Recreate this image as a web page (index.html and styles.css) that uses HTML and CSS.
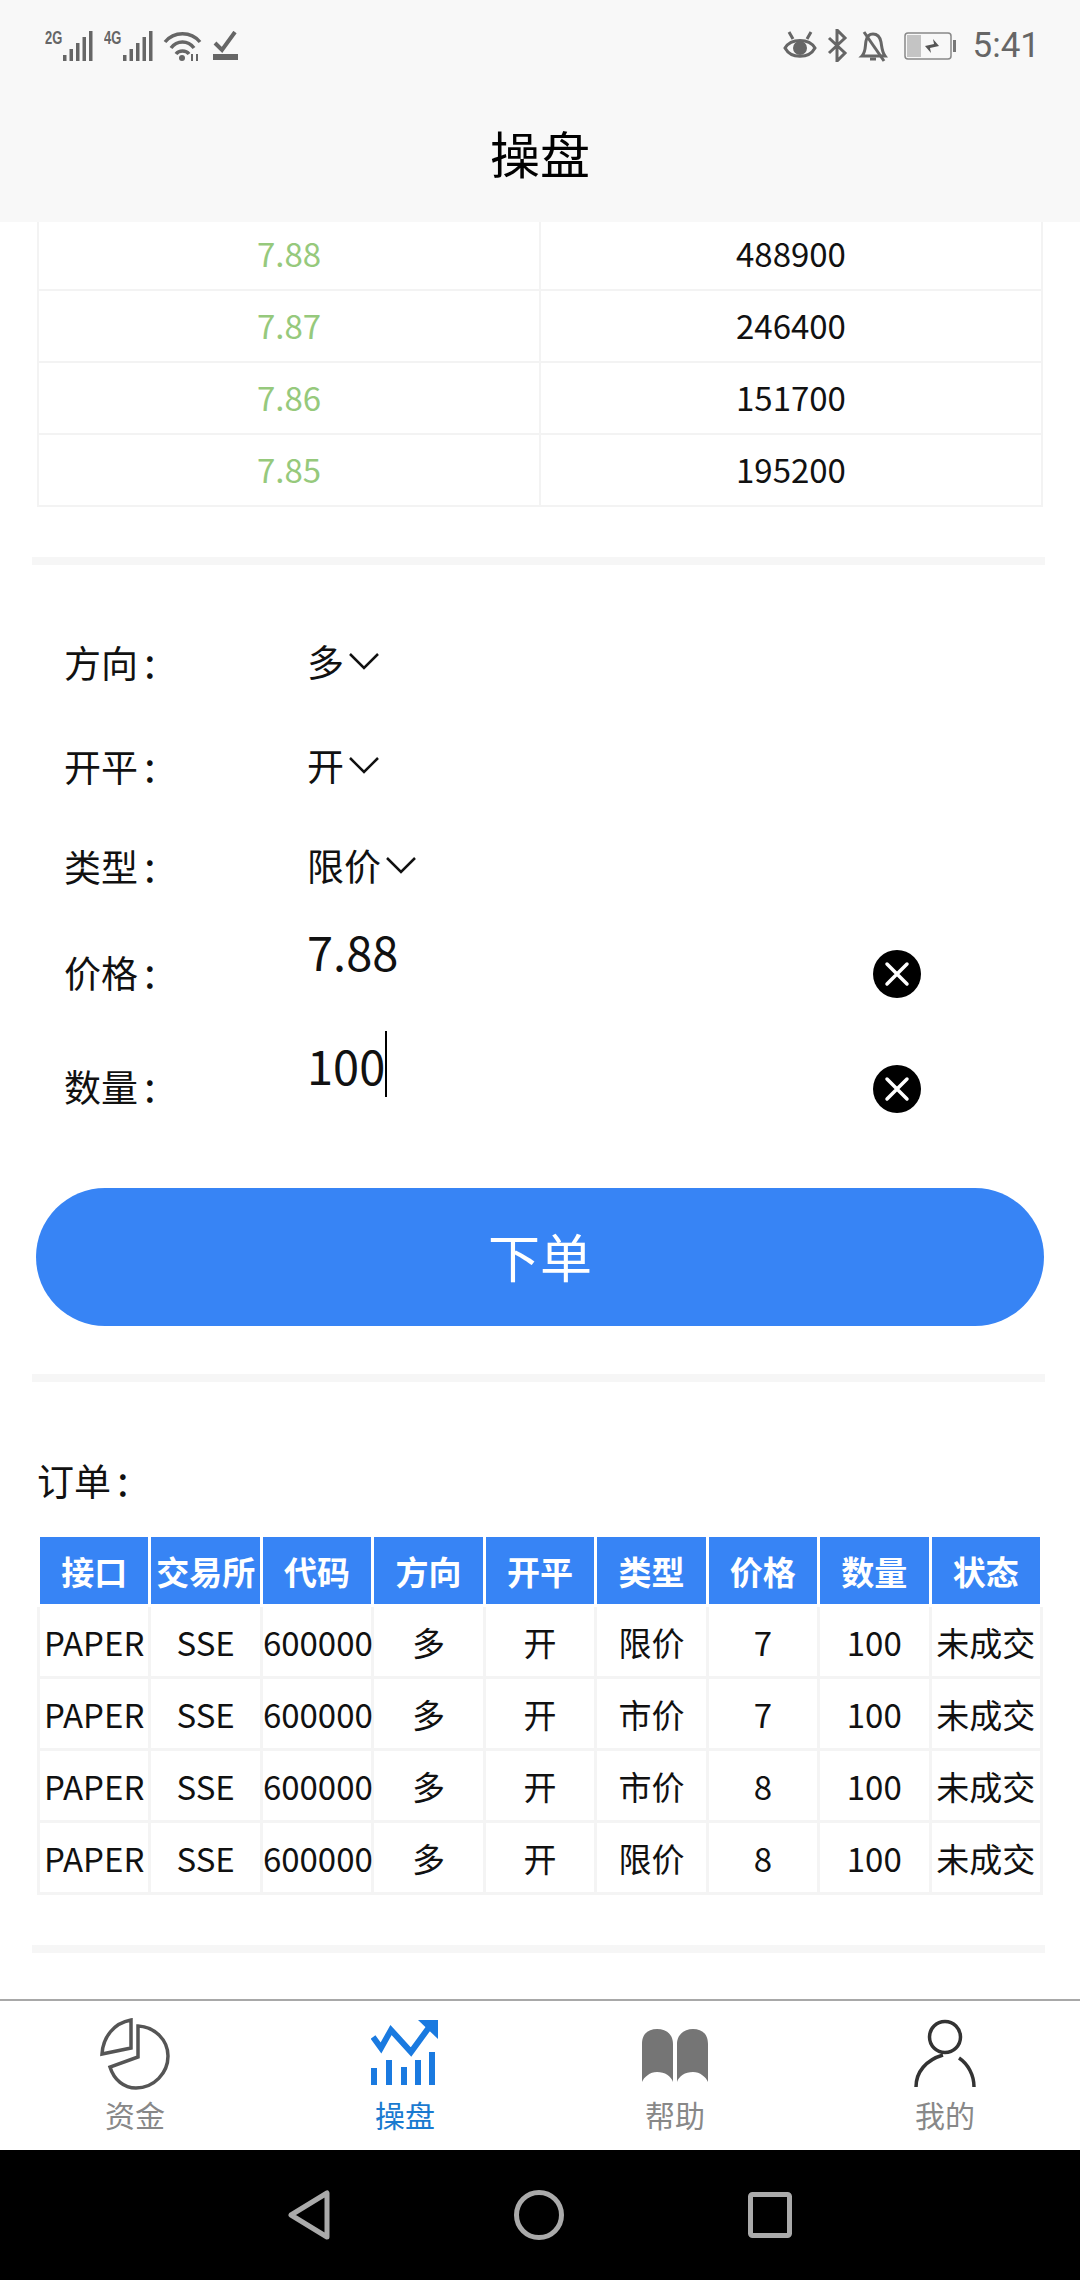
FILE: index.html
```html
<!DOCTYPE html>
<html lang="zh-CN">
<head>
<meta charset="UTF-8">
<meta name="viewport" content="width=device-width, initial-scale=1.0">
<title>操盘</title>
<link rel="stylesheet" href="styles.css">
</head>
<body>
<div class="app">
  <header class="header">
    <div class="status">
      <div class="status-left">
        <span class="net">2G</span>
        <svg class="ic-signal" width="31" height="32" viewBox="0 0 31 32">
          <g fill="#666"><rect x="1" y="25" width="3.5" height="6"/><rect x="7.5" y="19" width="3.5" height="12"/><rect x="14" y="13" width="3.5" height="18"/><rect x="20.5" y="7" width="3.5" height="24"/><rect x="27" y="1" width="3.5" height="30"/></g>
        </svg>
        <span class="net">4G</span>
        <svg class="ic-signal2" width="33" height="32" viewBox="0 0 33 32">
          <g fill="#666"><rect x="2" y="25" width="3.5" height="6"/><rect x="8.5" y="19" width="3.5" height="12"/><rect x="15" y="13" width="3.5" height="18"/><rect x="21.5" y="7" width="3.5" height="24"/><rect x="28" y="1" width="3.5" height="30"/></g>
        </svg>
        <svg class="ic-wifi" width="39" height="32" viewBox="0 0 39 32" fill="none" stroke="#666" stroke-width="3.5">
          <path d="M2 12C11 1 28 1 37 12"/><path d="M8 18C14 10 25 10 31 18"/><path d="M13 24C16 20 23 20 26 24"/>
          <circle cx="19" cy="28" r="3" fill="#666" stroke="none"/>
          <path d="M29 24v7M34 24v7" stroke-width="2"/>
        </svg>
        <svg class="ic-check" width="25" height="30" viewBox="0 0 25 30">
          <path d="M2 12l7 7L22 1" fill="none" stroke="#666" stroke-width="4"/>
          <rect x="0" y="23" width="25" height="6" fill="#666"/>
        </svg>
      </div>
      <div class="status-right">
        <svg class="ic-eye" width="34" height="30" viewBox="0 0 34 30" fill="none" stroke="#666" stroke-width="3">
          <path d="M2 17C8 7 26 7 32 17C26 28 8 28 2 17Z"/><circle cx="17" cy="17" r="7" fill="#666" stroke="none"/>
          <path d="M6 1l4 7M28 1l-4 7" stroke-width="3"/>
        </svg>
        <svg class="ic-bt" width="21" height="33" viewBox="0 0 21 33" fill="none" stroke="#666" stroke-width="3">
          <path d="M2 9l16 15-8 8V1l8 8L2 24"/>
        </svg>
        <svg class="ic-bell" width="30" height="32" viewBox="0 0 30 32" fill="none" stroke="#666" stroke-width="3">
          <path d="M4 26C8 22 7 16 8 11C9 6 12 4 15 4C19 4 22 7 23 12C24 18 24 22 27 26Z"/>
          <path d="M6 2L26 31" /><path d="M12 29h6" stroke-width="3"/>
        </svg>
        <svg class="ic-batt" width="52" height="28" viewBox="0 0 52 28">
          <rect x="1" y="1" width="46" height="26" rx="3" fill="none" stroke="#888" stroke-width="1.5"/>
          <rect x="3" y="3" width="14" height="22" fill="#c4c4c4"/>
          <rect x="49" y="8" width="3" height="12" fill="#777"/>
          <path d="M21 14l9-2-1-5 6 7-9 2 1 5z" fill="#555"/>
        </svg>
        <span class="time">5:41</span>
      </div>
    </div>
    <div class="title">操盘</div>
  </header>

  <main class="main">
    <div class="scroll">
      <table class="depth">
        <tr><td class="buy">7.88</td><td>488900</td></tr>
        <tr><td class="buy">7.87</td><td>246400</td></tr>
        <tr><td class="buy">7.86</td><td>151700</td></tr>
        <tr><td class="buy">7.85</td><td>195200</td></tr>
      </table>
      <div class="divider divider-first"></div>

      <div class="form">
        <div class="label">方向<span class="colon">:</span></div>
        <div class="select"><span>多</span><svg width="30" height="18" viewBox="0 0 30 18" fill="none" stroke="#111" stroke-width="2.5"><path d="M1 2l14 14L29 2"/></svg></div>
        <div></div>

        <div class="label">开平<span class="colon">:</span></div>
        <div class="select"><span>开</span><svg width="30" height="18" viewBox="0 0 30 18" fill="none" stroke="#111" stroke-width="2.5"><path d="M1 2l14 14L29 2"/></svg></div>
        <div></div>

        <div class="label">类型<span class="colon">:</span></div>
        <div class="select"><span>限价</span><svg width="30" height="18" viewBox="0 0 30 18" fill="none" stroke="#111" stroke-width="2.5"><path d="M1 2l14 14L29 2"/></svg></div>
        <div></div>

        <div class="label">价格<span class="colon">:</span></div>
        <div class="value">7.88</div>
        <svg class="clear" width="48" height="48" viewBox="0 0 48 48"><circle cx="24" cy="24" r="24" fill="#000"/><path d="M14 14l20 20M34 14L14 34" stroke="#fff" stroke-width="3.5" stroke-linecap="round"/></svg>

        <div class="label">数量<span class="colon">:</span></div>
        <div class="value value-qty">100<i class="caret"></i></div>
        <svg class="clear" width="48" height="48" viewBox="0 0 48 48"><circle cx="24" cy="24" r="24" fill="#000"/><path d="M14 14l20 20M34 14L14 34" stroke="#fff" stroke-width="3.5" stroke-linecap="round"/></svg>
      </div>

      <button class="submit" type="button">下单</button>
      <div class="divider divider-second"></div>

      <div class="orders-title">订单<span class="colon">:</span></div>
      <table class="orders">
        <tr><th>接口</th><th>交易所</th><th>代码</th><th>方向</th><th>开平</th><th>类型</th><th>价格</th><th>数量</th><th>状态</th></tr>
        <tr><td>PAPER</td><td>SSE</td><td>600000</td><td>多</td><td>开</td><td>限价</td><td>7</td><td>100</td><td>未成交</td></tr>
        <tr><td>PAPER</td><td>SSE</td><td>600000</td><td>多</td><td>开</td><td>市价</td><td>7</td><td>100</td><td>未成交</td></tr>
        <tr><td>PAPER</td><td>SSE</td><td>600000</td><td>多</td><td>开</td><td>市价</td><td>8</td><td>100</td><td>未成交</td></tr>
        <tr><td>PAPER</td><td>SSE</td><td>600000</td><td>多</td><td>开</td><td>限价</td><td>8</td><td>100</td><td>未成交</td></tr>
      </table>
      <div class="divider divider-third"></div>
    </div>
  </main>

  <nav class="tabbar">
    <div class="tab">
      <svg width="70" height="72" viewBox="0 0 70 72" fill="none" stroke="#555" stroke-width="3.5">
        <path d="M31 2C14 5 3 19 2 36L31 30Z"/>
        <path d="M38 8V39L10 49C14 62 24 70 36 70C54 70 68 55 68 38C68 22 55 9 38 8Z"/>
      </svg>
      <span>资金</span>
    </div>
    <div class="tab active">
      <svg width="68" height="72" viewBox="0 0 68 72">
        <path d="M2 19l8 11 10-18 20 22 19-26" fill="none" stroke="#1a7ae0" stroke-width="6"/>
        <path d="M47 2h20v19z" fill="#1a7ae0"/>
        <g fill="#1a7ae0"><rect x="0" y="50" width="6" height="17"/><rect x="15" y="42" width="6" height="25"/><rect x="30" y="49" width="6" height="18"/><rect x="44" y="42" width="6" height="25"/><rect x="58" y="34" width="6" height="33"/></g>
      </svg>
      <span>操盘</span>
    </div>
    <div class="tab">
      <svg width="68" height="72" viewBox="0 0 68 72" fill="#757575">
        <path d="M1 26C1 15 8 11 16 11C25 11 32 16 32 26V64C30 58 24 54 16 54C9 54 3 59 1 64Z"/>
        <path d="M36 26C36 16 44 11 52 11C60 11 67 15 67 26V64C65 59 59 54 52 54C44 54 38 58 36 64Z"/>
      </svg>
      <span>帮助</span>
    </div>
    <div class="tab">
      <svg width="62" height="72" viewBox="0 0 62 72" fill="none" stroke="#333" stroke-width="3.5">
        <circle cx="31" cy="19" r="15.5"/>
        <path d="M2 69C2 54 12 42 29 37"/><path d="M45 40C54 46 60 57 60 69"/>
      </svg>
      <span>我的</span>
    </div>
  </nav>

  <div class="navbar">
    <svg width="42" height="50" viewBox="0 0 42 50" fill="none" stroke="#aaa" stroke-width="5" stroke-linejoin="round"><path d="M39 3V47L3 25Z"/></svg>
    <svg width="50" height="50" viewBox="0 0 50 50" fill="none" stroke="#aaa" stroke-width="5"><circle cx="25" cy="25" r="22.5"/></svg>
    <svg width="44" height="46" viewBox="0 0 44 46" fill="none" stroke="#aaa" stroke-width="5" stroke-linejoin="round"><rect x="2.5" y="2.5" width="39" height="41" rx="2"/></svg>
  </div>
</div>
</body>
</html>
```

FILE: styles.css
```css
* {
  box-sizing: border-box;
}
body {
  margin: 0;
  background: #fff;
  color: #111;
  font-family: "Noto Sans CJK SC", "Noto Sans", sans-serif;
}
.app {
  width: 1080px;
  height: 2280px;
  display: flex;
  flex-direction: column;
  overflow: hidden;
}

/* top */
.header {
  height: 222px;
  flex: none;
  background: #f8f8f8;
}
.status {
  display: flex;
  justify-content: space-between;
  align-items: center;
  height: 62px;
  padding: 29px 40px 0 45px;
}
.status-left,
.status-right {
  display: flex;
  align-items: center;
}
.status svg {
  display: block;
}
.net {
  align-self: flex-start;
  width: 17px;
  font-family: "Liberation Sans", sans-serif;
  font-size: 18px;
  font-weight: 700;
  line-height: 16px;
  color: #666;
  white-space: nowrap;
  transform: scaleX(0.72);
  transform-origin: left center;
}
.ic-signal {
  margin-right: 11px;
}
.ic-signal2 {
  margin-right: 9px;
}
.ic-wifi {
  margin-right: 11px;
}
.ic-bt {
  margin: 0 10px;
}
.ic-bell {
  margin-right: 16px;
}
.time {
  margin-left: 17px;
  font-family: "Roboto", sans-serif;
  font-size: 35px;
  line-height: 32px;
  color: #666;
}
.title {
  margin-top: 60px;
  text-align: center;
  font-size: 50px;
  line-height: 60px;
  color: #000;
}

/* scrolled content */
.main {
  flex: 1;
  min-height: 0;
  overflow: hidden;
}
.scroll {
  margin-top: -5px;
}
table {
  border-collapse: collapse;
  table-layout: fixed;
  text-align: center;
}
.depth {
  width: 1006px;
  margin-left: 37px;
  font-size: 33px;
}
.depth td {
  height: 72px;
  padding: 0 0 3px;
  border: 2px solid #f3f3f3;
}
.depth .buy {
  color: #96c97c;
}
.divider {
  height: 8px;
  margin: 0 35px 0 32px;
  background: #f6f6f6;
}
.divider-first {
  margin-top: 50px;
}
.divider-second {
  margin-top: 48px;
}
.divider-third {
  margin-top: 50px;
}

/* order form */
.form {
  display: grid;
  grid-template-columns: 243px 1fr 48px;
  grid-template-rows: 104px 104px 96px 116px 113px;
  align-items: center;
  margin-top: 47px;
  padding: 0 159px 0 64px;
  font-size: 37px;
}
.label {
  padding-bottom: 7px;
  line-height: 50px;
}
.colon {
  margin-left: 6px;
  font-size: 42px;
}
.select {
  display: flex;
  align-items: center;
  gap: 5px;
  padding-bottom: 7px;
}
.value {
  align-self: start;
  margin-top: 4px;
  display: flex;
  align-items: center;
  height: 60px;
  font-size: 47px;
}
.value-qty {
  margin-top: 2px;
}
.caret {
  width: 2px;
  height: 66px;
  background: #000;
}
.submit {
  display: block;
  width: 1008px;
  height: 138px;
  margin: 43px 0 0 36px;
  padding: 0 0 4px;
  border: 0;
  border-radius: 69px;
  background: #3784f5;
  color: #fff;
  font-family: inherit;
  font-size: 52px;
}

/* orders */
.orders-title {
  margin: 71px 0 0 37px;
  font-size: 37px;
  line-height: 50px;
}
.orders {
  width: 1006px;
  margin: 29px 0 0 37px;
  font-size: 33px;
}
.orders th {
  height: 70px;
  padding: 0;
  border: 3px solid #fff;
  background: #3784f5;
  color: #fff;
  font-size: 33px;
  font-weight: 700;
}
.orders td {
  height: 72px;
  padding: 0;
  border: 3px solid #f4f4f4;
  white-space: nowrap;
}

/* bottom */
.tabbar {
  display: flex;
  flex: none;
  height: 151px;
  border-top: 2px solid #a8a8a8;
  background: #fff;
}
.tab {
  flex: 1;
  display: flex;
  flex-direction: column;
  align-items: center;
  padding-top: 17px;
  color: #888;
  font-size: 30px;
  line-height: 44px;
}
.tab svg {
  display: block;
  margin-bottom: 2px;
}
.tab.active {
  color: #1a7ad0;
}
.navbar {
  display: flex;
  justify-content: center;
  align-items: center;
  gap: 184px;
  flex: none;
  height: 130px;
  background: #000;
}
```
